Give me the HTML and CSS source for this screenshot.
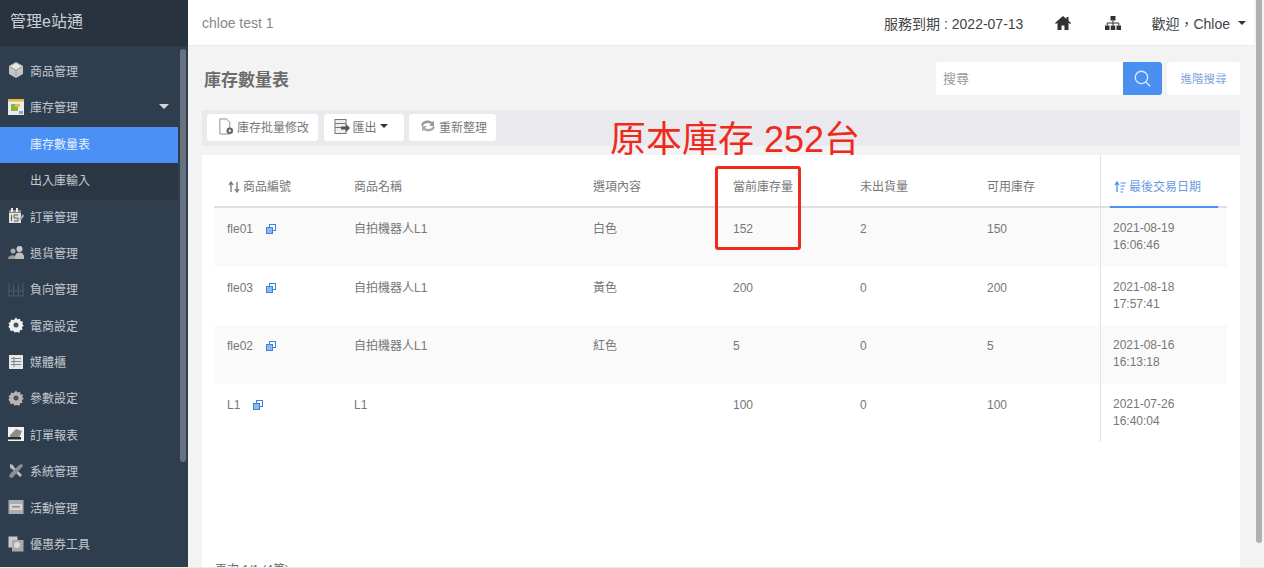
FILE: index.html
```html
<!DOCTYPE html>
<html lang="zh-Hant">
<head>
<meta charset="utf-8">
<title>庫存數量表</title>
<link rel="stylesheet" href="styles.css">
</head>
<body>
<div class="app">
  <aside class="sidebar">
    <div class="brand">管理e站通</div>
    <div class="side-body">
      <nav class="menu">
        <a class="item"><svg class="ico" viewBox="0 0 16 16"><path d="M8 0l7 4v8l-7 4-7-4V4z" fill="#c4c4c4"/><path d="M8 1.500l5.500 3L8 7.500 2.500 4.500z" fill="#e8e8e8"/><path d="M8 8v6.500M2 5l6 3 6-3" stroke="#a0a0a0" fill="none"/></svg><span>商品管理</span></a>
        <a class="item"><svg class="ico" viewBox="0 0 16 16"><rect width="16" height="16" fill="#e8edf2"/><rect width="16" height="2.500" fill="#eeb53a"/><rect x="3" y="5" width="7" height="7" fill="#8db33c"/><rect x="7" y="5" width="5" height="3" fill="#e2c23a"/><rect x="11" y="12" width="4" height="3" fill="#9aa5b0"/></svg><span>庫存管理</span><i class="caret"></i></a>
        <a class="item sub active"><span>庫存數量表</span></a>
        <a class="item sub"><span>出入庫輸入</span></a>
        <a class="item"><svg class="ico" viewBox="0 0 16 16"><rect x="1" y="2" width="12" height="13" fill="#dedede"/><rect x="1" y="2" width="12" height="3" fill="#8a8a8a"/><rect x="3" y="0" width="2" height="4" fill="#eee"/><rect x="8" y="0" width="2" height="4" fill="#eee"/><path d="M3.500 7v6M6 7h4M6 7v3h4v3H6" stroke="#6b6250" fill="none"/><path d="M11 11l4-5 1 2-3 4z" fill="#aaa"/></svg><span>訂單管理</span></a>
        <a class="item"><svg class="ico" viewBox="0 0 16 16"><circle cx="5" cy="7" r="2.500" fill="#aaa"/><circle cx="11.500" cy="5" r="3" fill="#ccc"/><path d="M0 15c0-5 9-5 9 0z" fill="#999"/><path d="M7 13c0-6 9-6 9 0v2H7z" fill="#bdbdbd"/></svg><span>退貨管理</span></a>
        <a class="item"><svg class="ico" viewBox="0 0 16 16"><path d="M1 2v13h14V2M5.500 4v11M10.500 4v11M1 10h14" stroke="#4d5a68" fill="none"/></svg><span>負向管理</span></a>
        <a class="item"><svg class="ico" viewBox="0 0 16 16"><path d="M8 0.500l1.500 2 2.500-.8.500 2.600 2.600.5-.8 2.500 1.500 1.500-2 1.500.8 2.500-2.600.5-.5 2.500-2.500-.8L6.500 15.500l-1.500-2-2.500.8L2 11.700l-1.600-2L1.500 8 .5 6l2-1 .5-2.600 2.500.8z" fill="#f0f0f0"/><circle cx="8" cy="8" r="2.500" fill="#46525f"/></svg><span>電商設定</span></a>
        <a class="item"><svg class="ico" viewBox="0 0 16 16"><rect x="1" y="1" width="14" height="14" fill="#e6e6e6"/><path d="M3 4.500h10M3 7.500h10M3 10.500h10M6 3v10" stroke="#7d858e" fill="none"/></svg><span>媒體櫃</span></a>
        <a class="item"><svg class="ico" viewBox="0 0 16 16"><path d="M8 0.500l1.500 2 2.500-.8.500 2.600 2.600.5-.8 2.500 1.500 1.500-2 1.500.8 2.500-2.600.5-.5 2.500-2.500-.8L6.500 15.500l-1.500-2-2.500.8L2 11.700l-1.600-2L1.500 8 .5 6l2-1 .5-2.600 2.500.8z" fill="#b5b5b5"/><circle cx="8" cy="8" r="2.500" fill="#46525f"/></svg><span>參數設定</span></a>
        <a class="item"><svg class="ico" viewBox="0 0 16 16"><rect y="1" width="16" height="14" fill="#f2f2f2"/><path d="M2 9l6-6 6 2-3 7H2z" fill="#8b8f88"/><rect y="11" width="13" height="2.500" fill="#2d3028"/></svg><span>訂單報表</span></a>
        <a class="item"><svg class="ico" viewBox="0 0 16 16"><path d="M2 1l3 1 1 2 8 8-2 2-8-8-2-1z" fill="#bcbcbc"/><path d="M14 1l1 2-9 10-2 2-3-1 1-3 9-9z" fill="#8f8f8f"/></svg><span>系統管理</span></a>
        <a class="item"><svg class="ico" viewBox="0 0 16 16"><rect x="0.500" y="1" width="15" height="14" fill="#adadad"/><rect x="2" y="5" width="12" height="6" fill="#d6d6d6"/><rect x="4" y="7" width="8" height="1.500" fill="#8a8a8a"/></svg><span>活動管理</span></a>
        <a class="item"><svg class="ico" viewBox="0 0 16 16"><rect x="0.500" y="0.500" width="9" height="11" fill="#c9c9c9"/><rect x="4" y="4" width="11.500" height="11.500" fill="#a9a9a9"/><circle cx="9" cy="9" r="3" fill="#dcdcdc"/></svg><span>優惠券工具</span></a>
      </nav>
      <div class="side-thumb"></div>
    </div>
  </aside>

  <div class="main">
    <header class="topbar">
      <div class="company">chloe test 1</div>
      <div class="top-right">
        <span class="expiry">服務到期 : 2022-07-13</span>
        <svg class="top-ico home" viewBox="0 0 16 14"><path d="M8 0L0 7l1 1 1.500-1.200V14h4V9.500h3V14h4V6.800L15 8l1-1-2.500-2.200V1h-2v2z" fill="#333"/></svg>
        <svg class="top-ico tree" viewBox="0 0 16 14"><path d="M5.500 0h5v4.500h-5zM0 9.500h4.500V14H0zM5.750 9.500h4.500V14h-4.500zM11.500 9.500H16V14h-4.500z" fill="#333"/><path d="M8 4.500v5M2.200 9.500V7h11.600v2.500" stroke="#333" fill="none"/></svg>
        <span class="welcome">歡迎，Chloe</span>
        <i class="caret dark"></i>
      </div>
    </header>

    <div class="content">
      <div class="title-row">
        <h1>庫存數量表</h1>
        <div class="search">
          <div class="search-input">搜尋</div>
          <button class="search-btn"><svg viewBox="0 0 16 16" width="17" height="17"><circle cx="7" cy="7" r="5.800" fill="none" stroke="#d8e8ff" stroke-width="1.300"/><path d="M11.200 11.200l4 4" stroke="#d8e8ff" stroke-width="1.300"/></svg></button>
          <button class="adv">進階搜尋</button>
        </div>
      </div>

      <div class="toolbar">
        <button class="tool"><svg class="t-ico" viewBox="0 0 16 18"><path d="M1.500 1h7l3.500 3.500V17h-10.500z" fill="#fff" stroke="#888"/><circle cx="12" cy="13.500" r="3.500" fill="#666"/><circle cx="12" cy="13.500" r="1.200" fill="#fff"/></svg>庫存批量修改</button>
        <button class="tool"><svg class="t-ico" viewBox="0 0 16 16"><rect x="1" y="1" width="11" height="14" fill="#eee" stroke="#777"/><path d="M1 5h11M1 9h11" stroke="#777"/><path d="M7 8h5V5.500l4 4-4 4V11H7z" fill="#555"/></svg>匯出<i class="caret dark small"></i></button>
        <button class="tool"><svg class="t-ico wide" viewBox="0 0 16 14"><path d="M1 6c1-4 7-6 11-3l2-1v5H9l2-2C8 3 4 4 3 7z" fill="#999"/><path d="M15 8c-1 4-7 6-11 3l-2 1V7h5L5 9c3 2 7 1 8-2z" fill="#aaa"/></svg>重新整理</button>
      </div>

      <section class="card">
        <div class="table">
          <div class="row head">
            <div class="cell"><svg class="sort" viewBox="0 0 12 12"><path d="M3 11V2M1 4l2-3 2 3M9 1v9M7 8l2 3 2-3" stroke="#777" stroke-width="1.300" fill="none"/></svg>商品編號</div>
            <div class="cell">商品名稱</div>
            <div class="cell">選項內容</div>
            <div class="cell">當前庫存量</div>
            <div class="cell">未出貨量</div>
            <div class="cell">可用庫存</div>
            <div class="cell last sorted"><svg class="sort" viewBox="0 0 12 12"><path d="M3 11V2M1 4l2-3 2 3" stroke="#4a90f5" stroke-width="1.300" fill="none"/><path d="M6.500 2H12M6.500 5h4.500M6.500 8h3.500M6.500 11H9" stroke="#4a90f5"/></svg>最後交易日期</div>
          </div>
          <div class="row shade">
            <div class="cell">fle01<svg class="link" viewBox="0 0 10 10"><rect x="3.500" y="0.500" width="6" height="6" fill="#fff" stroke="#3b82d8"/><rect x="0.500" y="3.500" width="6" height="6" fill="#8dbbf0" stroke="#3b82d8"/></svg></div>
            <div class="cell">自拍機器人L1</div><div class="cell">白色</div><div class="cell">152</div><div class="cell">2</div><div class="cell">150</div>
            <div class="cell last">2021-08-19<br>16:06:46</div>
          </div>
          <div class="row">
            <div class="cell">fle03<svg class="link" viewBox="0 0 10 10"><rect x="3.500" y="0.500" width="6" height="6" fill="#fff" stroke="#3b82d8"/><rect x="0.500" y="3.500" width="6" height="6" fill="#8dbbf0" stroke="#3b82d8"/></svg></div>
            <div class="cell">自拍機器人L1</div><div class="cell">黃色</div><div class="cell">200</div><div class="cell">0</div><div class="cell">200</div>
            <div class="cell last">2021-08-18<br>17:57:41</div>
          </div>
          <div class="row shade">
            <div class="cell">fle02<svg class="link" viewBox="0 0 10 10"><rect x="3.500" y="0.500" width="6" height="6" fill="#fff" stroke="#3b82d8"/><rect x="0.500" y="3.500" width="6" height="6" fill="#8dbbf0" stroke="#3b82d8"/></svg></div>
            <div class="cell">自拍機器人L1</div><div class="cell">紅色</div><div class="cell">5</div><div class="cell">0</div><div class="cell">5</div>
            <div class="cell last">2021-08-16<br>16:13:18</div>
          </div>
          <div class="row">
            <div class="cell">L1<svg class="link" viewBox="0 0 10 10"><rect x="3.500" y="0.500" width="6" height="6" fill="#fff" stroke="#3b82d8"/><rect x="0.500" y="3.500" width="6" height="6" fill="#8dbbf0" stroke="#3b82d8"/></svg></div>
            <div class="cell">L1</div><div class="cell"></div><div class="cell">100</div><div class="cell">0</div><div class="cell">100</div>
            <div class="cell last">2021-07-26<br>16:40:04</div>
          </div>
        </div>
        <div class="pager">頁次 1/1 (4筆)</div>
      </section>

      <div class="note">原本庫存 252台</div>
      <div class="note-box"></div>
    </div>
  </div>
  <div class="page-scroll"><div class="page-thumb"></div></div>
</div>
</body>
</html>
```

FILE: styles.css
```css
* { box-sizing: border-box; }
html, body { margin: 0; height: 100%; overflow: hidden; }
body {
  font-family: "Liberation Sans", "Noto Sans CJK TC", sans-serif;
  font-size: 12px;
  color: #777;
  background: #e9eedd;
}
.app { display: flex; height: 567px; overflow: hidden; background: #f3f3f4; }

/* sidebar */
.sidebar { width: 188px; flex: none; background: #2f3e4e; display: flex; flex-direction: column; }
.brand {
  height: 46px; flex: none; background: #29323f; color: #c9ced3;
  font-size: 16px; line-height: 44px; padding-left: 10px;
}
.side-body { flex: 1; display: flex; min-height: 0; }
.menu { width: 178px; flex: none; padding-top: 8px; }
.item {
  display: flex; align-items: center; height: 36.4px; padding: 0 0 3.500px 8px;
  color: #c2c8ce; font-size: 12px;
}
.item span { margin-left: 6px; }
.ico { width: 16px; height: 16px; flex: none; }
.sub { padding-left: 30px; background: #2a3644; }
.sub span { margin-left: 0; }
.active { background: #4a90f5; color: #e8f1fe; }
.caret {
  width: 0; height: 0; border-left: 5px solid transparent; border-right: 5px solid transparent;
  border-top: 5px solid #d5d9dd; margin-left: auto; margin-right: 9px;
}
.caret.dark { border-top-color: #333; border-left-width: 4px; border-right-width: 4px; border-top-width: 4px; margin: 0 0 0 8px; }
.caret.small { margin-left: 3px; }
.side-thumb { width: 6px; height: 413px; margin: 3px 0 0 2px; background: #66727f; border-radius: 3px; }

/* main */
.main { flex: 1; min-width: 0; display: flex; flex-direction: column; position: relative; }
.topbar {
  height: 46px; flex: none; background: #fff; display: flex; align-items: center;
  justify-content: space-between; padding: 0 8px 0 14px; border-bottom: 1px solid #eaeaea;
}
.company { font-size: 14px; color: #888; }
.top-right { display: flex; align-items: center; color: #444; font-size: 14px; }
.top-ico { height: 14px; width: 16px; }
.home { margin-left: 32px; }
.tree { margin-left: 34px; }
.welcome { margin-left: 30px; }

.content { flex: 1; padding: 0 14px; position: relative; min-height: 0; }
.title-row { display: flex; justify-content: space-between; align-items: center; height: 64px; }
h1 { margin: 0 0 0 2px; font-size: 17px; font-weight: 700; color: #6b6b6b; }
.search { display: flex; align-items: stretch; height: 33px; }
.search-input {
  width: 187px; background: #fff; color: #999; font-size: 13px; line-height: 33px; padding-left: 7px;
  border-radius: 3px 0 0 3px;
}
.search-btn {
  width: 39px; border: 0; padding: 0; background: #4a90f0; border-radius: 0 3px 3px 0;
  display: flex; align-items: center; justify-content: center;
}
.adv {
  width: 73px; margin-left: 5px; border: 0; background: #fff; border-radius: 3px; color: #7ea7e0;
  font: inherit; font-size: 11.500px;
}
.toolbar {
  height: 36px; background: #e9e9ee; display: flex; align-items: center; gap: 5.500px; padding: 0 0 2px 5px;
}
.tool {
  height: 27px; border: 0; background: #fff; border-radius: 3px; display: flex; align-items: center;
  font: inherit; color: #777; padding: 0 9px 2px 11px; white-space: nowrap;
}
.tool:nth-child(2) { padding: 0 16px 2px 10px; }
.t-ico { width: 16px; height: 17px; margin-right: 3px; flex: none; }
.t-ico.wide { height: 14px; }

.card { background: #fff; margin-top: 9px; padding: 8px 13px 0 12px; height: 420px; }
.table { display: flex; flex-direction: column; }
.row {
  display: grid; grid-template-columns: 127px 239px 140px 127px 127px 126px 127px;
  height: 58.500px;
}
.head { height: 45px; border-bottom: 2px solid #dfdfe1; }
.shade { background: #fafafa; }
.cell { padding: 12px 0 0 13px; line-height: 18px; color: #777; font-size: 12px; display: block; }
.head .cell { padding-top: 15px; }
.last { position: relative; padding-left: 12px; border-left: 1px solid #e3e3e6; line-height: 17px; }
.row:first-child .last::before {
  content: ""; position: absolute; left: -1px; top: -8px; height: 8px; border-left: 1px solid #e3e3e6;
}
.sorted { color: #6b9ae0; line-height: 18px; }
.sorted::after {
  content: ""; position: absolute; left: 9px; bottom: -2px; width: 108px; height: 2px; background: #4a90f5;
}
.head .sorted { padding-left: 13px; }
.sort { width: 12px; height: 12px; margin-right: 3px; vertical-align: -2px; }
.head .cell:first-child { padding-left: 14px; }
.link { width: 10px; height: 10px; margin-left: 13px; vertical-align: -1px; }
.pager { margin-top: 118px; color: #666; font-size: 12px; padding-left: 1px; }

/* annotation drawn over the table */
.note {
  position: absolute; left: 422px; top: 72px; color: #ee2a1c; font-size: 36px; line-height: 44px; white-space: nowrap;
}
.note-box {
  position: absolute; left: 527px; top: 120px; width: 86px; height: 84px;
  border: 3px solid #ee2a1c; border-radius: 3px;
}

/* page scrollbar */
.page-scroll { width: 10px; flex: none; background: #f3f3f3; padding-left: 2px; }
.page-thumb { width: 6px; height: 543px; background: #b0b0b0; border-radius: 0 0 3px 3px; }
```
